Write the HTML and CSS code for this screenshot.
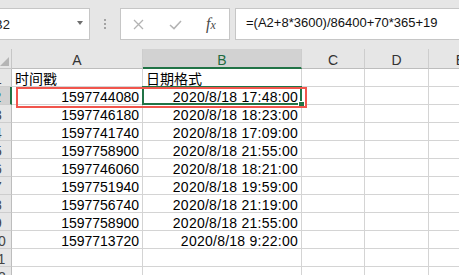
FILE: index.html
```html
<!DOCTYPE html>
<html lang="zh-CN">
<head>
  <meta charset="UTF-8">
  <title>时间戳转换</title>
  <link rel="stylesheet" href="styles.css">
</head>
<body>
  <div class="window">
    <div class="formula-bar">
      <div class="name-box">
        <span class="ref">B2</span>
        <span class="caret"></span>
      </div>
      <div class="grip"></div>
      <div class="fx-box">
        <svg class="ico-x" width="11" height="11" viewBox="0 0 11 11">
          <path d="M1 1 L10 10 M10 1 L1 10" stroke="#b3b3b3" stroke-width="1.3" fill="none"/>
        </svg>
        <svg class="ico-ok" width="13" height="10" viewBox="0 0 13 10">
          <path d="M1 5 L5 8.6 L12 1" stroke="#b3b3b3" stroke-width="1.5" fill="none"/>
        </svg>
        <span class="fx">f<small>x</small></span>
      </div>
      <div class="formula">=(A2+8*3600)/86400+70*365+19</div>
    </div>

    <div class="sheet">
      <div class="corner"></div>
      <div class="col-head">A</div>
      <div class="col-head sel">B</div>
      <div class="col-head">C</div>
      <div class="col-head">D</div>
      <div class="col-head">E</div>

      <div class="row-head">1</div>
      <div class="cell">时间戳</div>
      <div class="cell">日期格式</div>
      <div class="cell"></div><div class="cell"></div><div class="cell"></div>

      <div class="row-head sel">2</div>
      <div class="cell num">1597744080</div>
      <div class="cell num date active">2020/8/18 17:48:00</div>
      <div class="cell"></div><div class="cell"></div><div class="cell"></div>

      <div class="row-head">3</div>
      <div class="cell num">1597746180</div>
      <div class="cell num date">2020/8/18 18:23:00</div>
      <div class="cell"></div><div class="cell"></div><div class="cell"></div>

      <div class="row-head">4</div>
      <div class="cell num">1597741740</div>
      <div class="cell num date">2020/8/18 17:09:00</div>
      <div class="cell"></div><div class="cell"></div><div class="cell"></div>

      <div class="row-head">5</div>
      <div class="cell num">1597758900</div>
      <div class="cell num date">2020/8/18 21:55:00</div>
      <div class="cell"></div><div class="cell"></div><div class="cell"></div>

      <div class="row-head">6</div>
      <div class="cell num">1597746060</div>
      <div class="cell num date">2020/8/18 18:21:00</div>
      <div class="cell"></div><div class="cell"></div><div class="cell"></div>

      <div class="row-head">7</div>
      <div class="cell num">1597751940</div>
      <div class="cell num date">2020/8/18 19:59:00</div>
      <div class="cell"></div><div class="cell"></div><div class="cell"></div>

      <div class="row-head">8</div>
      <div class="cell num">1597756740</div>
      <div class="cell num date">2020/8/18 21:19:00</div>
      <div class="cell"></div><div class="cell"></div><div class="cell"></div>

      <div class="row-head">9</div>
      <div class="cell num">1597758900</div>
      <div class="cell num date">2020/8/18 21:55:00</div>
      <div class="cell"></div><div class="cell"></div><div class="cell"></div>

      <div class="row-head">10</div>
      <div class="cell num">1597713720</div>
      <div class="cell num date">2020/8/18 9:22:00</div>
      <div class="cell"></div><div class="cell"></div><div class="cell"></div>

      <div class="row-head">11</div>
      <div class="cell"></div><div class="cell"></div>
      <div class="cell"></div><div class="cell"></div><div class="cell"></div>

      <div class="row-head">12</div>
      <div class="cell"></div><div class="cell"></div>
      <div class="cell"></div><div class="cell"></div><div class="cell"></div>

      <!-- marca roja sobre la fila 2 -->
      <div class="mark"></div>
    </div>
  </div>
</body>
</html>
```

FILE: styles.css
```css
body {
  margin: 0;
  overflow: hidden;
  background-color: #fff;
  font-family: "Liberation Sans", "Noto Sans CJK SC", sans-serif;
}
.window {
  margin-left: -15px;
  width: 520px;
}

/* barra de formulas */
.formula-bar {
  display: flex;
  align-items: flex-start;
  height: 49px;
  padding-top: 8px;
  box-sizing: border-box;
  background-color: #e6e6e6;
}
.name-box {
  display: flex;
  align-items: flex-start;
  width: 105px;
  height: 32px;
  box-sizing: border-box;
  padding: 3px 6px 0 8px;
  border: 1px solid #c6c6c6;
  background-color: #fff;
  font-size: 13px;
  line-height: 26px;
  color: #222;
}
.name-box .ref {
  flex: 1;
}
.caret {
  width: 0;
  height: 0;
  margin-top: 9px;
  border-left: 3.5px solid transparent;
  border-right: 3.5px solid transparent;
  border-top: 4px solid #6e6e6e;
}
.grip {
  width: 0;
  height: 10px;
  margin: 11px 14px 0 14px;
  border-left: 2px dotted #a3a3a3;
}
.fx-box {
  display: flex;
  align-items: center;
  width: 110px;
  height: 32px;
  box-sizing: border-box;
  padding-left: 12px;
  border: 1px solid #c6c6c6;
  background-color: #fff;
}
.ico-x {
  margin-top: 1px;
}
.ico-ok {
  margin-left: 25px;
  margin-top: 2px;
}
.fx {
  margin-left: 24px;
  font-family: "Liberation Serif", serif;
  font-style: italic;
  font-size: 16px;
  color: #4a4a4a;
}
.fx small {
  font-size: 12px;
}
.formula {
  flex: 1;
  height: 32px;
  box-sizing: border-box;
  margin-left: 5px;
  padding-left: 10px;
  border: 1px solid #c6c6c6;
  border-right: none;
  background-color: #fff;
  font-size: 13px;
  line-height: 27px;
  color: #111;
  white-space: nowrap;
}

/* hoja */
.sheet {
  position: relative;
  display: grid;
  grid-template-columns: 27px 131px 159px 63px 64px 64px;
  grid-template-rows: 20px;
  grid-auto-rows: 18px;
}
.sheet > div {
  box-sizing: border-box;
  border-right: 1px solid #d4d4d4;
  border-bottom: 1px solid #d4d4d4;
  overflow: hidden;
  white-space: nowrap;
  font-size: 14px;
}
.corner {
  position: relative;
  background-color: #e6e6e6;
  border-color: #c6c6c6 !important;
}
.corner::after {
  content: '';
  position: absolute;
  right: 2px;
  bottom: 2px;
  border-left: 9px solid transparent;
  border-bottom: 9px solid #b5b5b5;
}
.col-head {
  background-color: #e6e6e6;
  border-right-color: #cdcdcd !important;
  border-bottom-color: #bdbdbd !important;
  text-align: center;
  padding-top: 3px;
  line-height: 16px;
  color: #333;
}
.col-head.sel {
  background-color: #d2d2d2;
  color: #1e6b40;
  border-bottom: 2px solid #217346 !important;
}
.row-head {
  background-color: #e6e6e6;
  border-right-color: #bdbdbd !important;
  border-bottom-color: #cdcdcd !important;
  text-align: center;
  padding-top: 3px;
  line-height: 14px;
  color: #444;
}
.row-head.sel {
  background-color: #d2d2d2;
  color: #1e6b40;
  border-right: 2px solid #217346 !important;
}
.cell {
  padding: 3px 3px 0;
  line-height: 14px;
  color: #000;
}
.cell.num {
  text-align: right;
}
.cell.date {
  letter-spacing: 0.25px;
}
.cell.active {
  position: relative;
  overflow: visible !important;
}
.cell.active::before {
  content: '';
  position: absolute;
  left: -1px;
  top: -1px;
  right: -1px;
  bottom: -1px;
  border: 2px solid #217346;
}
.cell.active::after {
  content: '';
  position: absolute;
  right: -4px;
  bottom: -4px;
  width: 5px;
  height: 5px;
  background-color: #217346;
  border: 1px solid #fff;
}
.mark {
  position: absolute;
  left: 31px;
  top: 38px;
  width: 291px;
  height: 21px;
  box-sizing: border-box;
  border: 2px solid #f1554c !important;
  z-index: 2;
}
```
